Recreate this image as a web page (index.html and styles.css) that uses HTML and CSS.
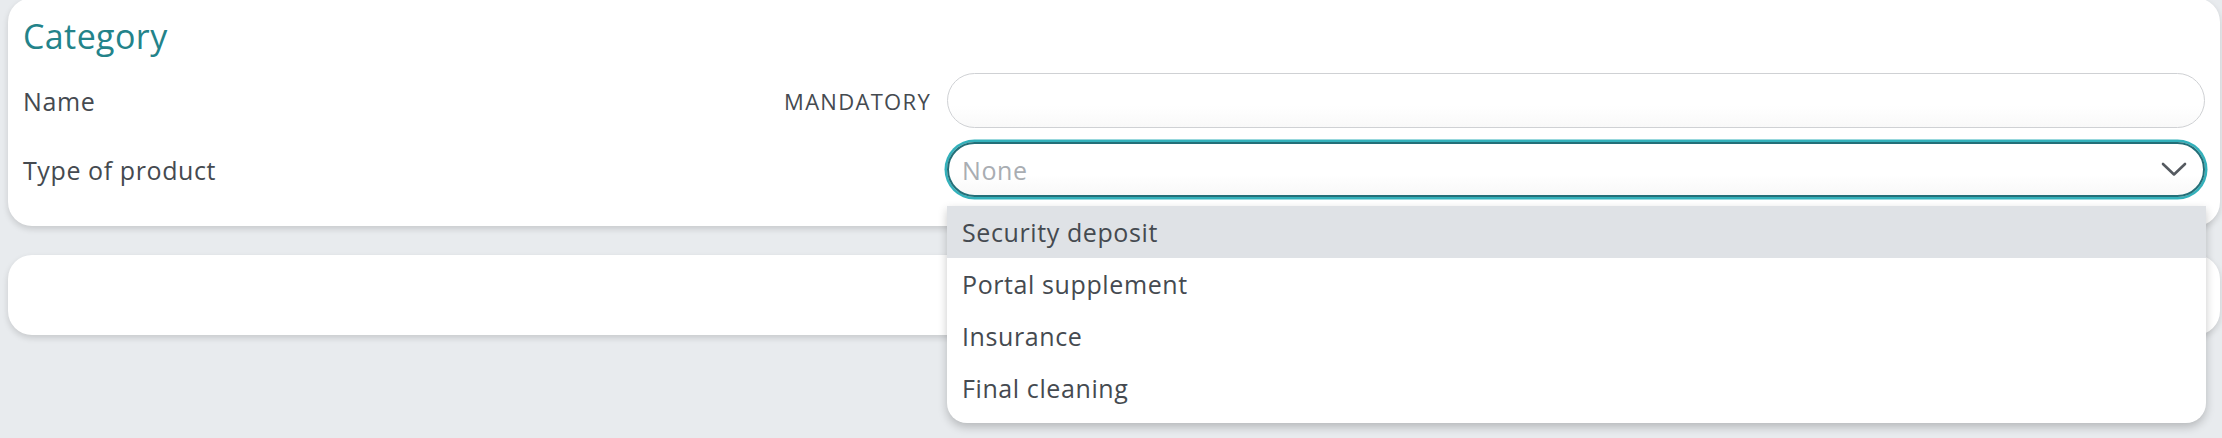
FILE: index.html
```html
<!DOCTYPE html>
<html lang="en">
<head>
    <meta charset="UTF-8">
    <meta name="viewport" content="width=device-width, initial-scale=1.0">
    <title>Category</title>
    <link rel="stylesheet" href="styles.css">
</head>
<body>
    <div class="card form-card">
        <h2 class="card-title">Category</h2>

        <div class="form-row">
            <div class="label-cell">
                <label for="name">Name</label>
                <span class="mandatory">MANDATORY</span>
            </div>
            <input class="text-input" id="name" type="text">
        </div>

        <div class="form-row">
            <div class="label-cell">
                <label>Type of product</label>
            </div>
            <div class="select-wrap">
                <div class="select-box">
                    <span class="placeholder">None</span>
                    <svg class="chevron" width="26" height="15" viewBox="0 0 26 15">
                        <path d="M2 2 L13 12.5 L24 2" fill="none" stroke="#555a60" stroke-width="2.6" stroke-linecap="round" stroke-linejoin="round"/>
                    </svg>
                </div>
                <ul class="dropdown">
                    <li class="active">Security deposit</li>
                    <li>Portal supplement</li>
                    <li>Insurance</li>
                    <li>Final cleaning</li>
                </ul>
            </div>
        </div>
    </div>

    <div class="card empty-card"></div>
</body>
</html>
```

FILE: styles.css
```css
html {
    height: 100%;
}
body {
    font-family: "Open Sans", "Noto Sans", sans-serif;
    background-color: #e8ebee;
    margin: 0;
    min-height: 100%;
    padding: 0 2px 0 8px;
    color: #454a50;
}
.card {
    background-color: #fff;
    border-radius: 24px;
    box-shadow: 0 3px 6px rgba(0, 0, 0, 0.14);
}
.form-card {
    margin-top: -2px;
    padding: 16px 15px 29px 15px;
}
.card-title {
    margin: 0 0 15px 0;
    font-size: 34px;
    line-height: 44px;
    font-weight: 400;
    letter-spacing: 0.4px;
    color: #23838a;
}
.form-row {
    display: grid;
    grid-template-columns: 1fr 1258px;
    align-items: center;
    margin-bottom: 14px;
}
.form-row:last-child {
    margin-bottom: 0;
}
.label-cell {
    display: flex;
    justify-content: space-between;
    align-items: center;
    padding-right: 16px;
    font-size: 25px;
    letter-spacing: 0.6px;
}
.mandatory {
    font-size: 22px;
    letter-spacing: 1.3px;
}
.text-input {
    box-sizing: border-box;
    height: 55px;
    width: 100%;
    border: 1.5px solid #cfd1d4;
    border-radius: 28px;
    background: linear-gradient(#fff 60%, #f9f9f9);
    outline: none;
    margin: 0;
}
.select-wrap {
    position: relative;
}
.select-box {
    box-sizing: border-box;
    height: 55px;
    border: 2px solid #236f78;
    border-radius: 28px;
    box-shadow: 0 0 0 2.5px #33b1bb;
    background: linear-gradient(#fff 60%, #f8f8f8);
    display: flex;
    align-items: center;
    justify-content: space-between;
    padding: 0 16px 0 13px;
    font-size: 25px;
    letter-spacing: 0.6px;
}
.placeholder {
    color: #a9adb2;
}
.dropdown {
    position: absolute;
    top: 64px;
    left: 0;
    right: -1px;
    list-style: none;
    margin: 0;
    padding: 0 0 9px 0;
    background: #fff;
    border-radius: 0 0 20px 20px;
    box-shadow: 0 4px 10px rgba(0, 0, 0, 0.22);
    font-size: 25px;
    letter-spacing: 0.6px;
    color: #454a50;
    z-index: 2;
}
.dropdown li {
    height: 52px;
    line-height: 52px;
    padding-left: 15px;
}
.dropdown li.active {
    background: #dfe2e6;
}
.empty-card {
    margin-top: 29px;
    height: 80px;
}
```
